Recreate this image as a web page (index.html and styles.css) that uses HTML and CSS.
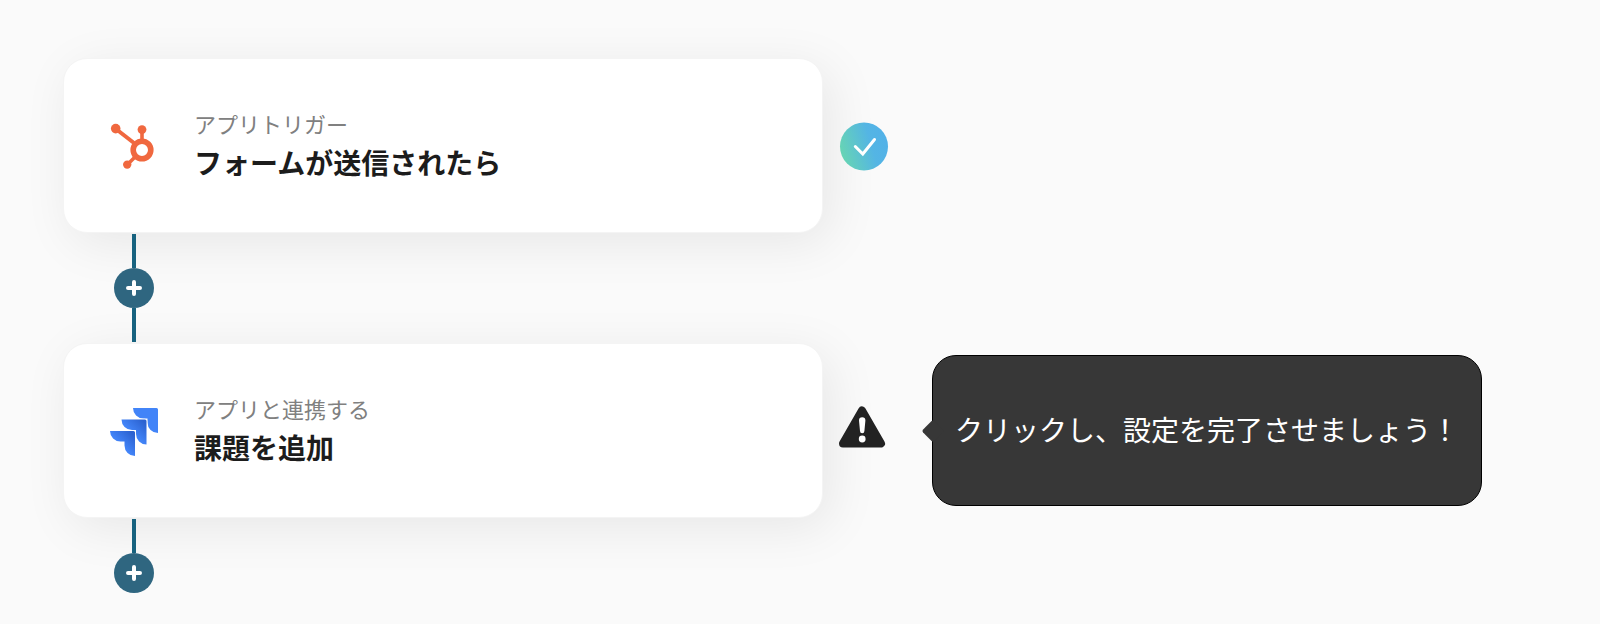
FILE: index.html
```html
<!DOCTYPE html>
<html lang="ja">
<head>
    <meta charset="UTF-8">
    <meta name="viewport" content="width=device-width, initial-scale=1.0">
    <title>ワークフロー</title>
    <link rel="stylesheet" href="styles.css">
</head>
<body>
    <main class="flow">
        <!-- Trigger step -->
        <section class="step">
            <div class="card">
                <svg class="card-icon" viewBox="0 0 48 48" aria-hidden="true">
                    <g fill="none" stroke="#f0683f">
                        <path d="M6 7L24 21" stroke-width="4"/>
                        <path d="M32 7V19" stroke-width="3.600"/>
                        <path d="M26 34L17 43" stroke-width="3.600"/>
                        <circle cx="32" cy="28" r="8.800" stroke-width="5.600"/>
                    </g>
                    <g fill="#f0683f">
                        <circle cx="5.700" cy="6.600" r="4.800"/>
                        <circle cx="32" cy="7.600" r="4.400"/>
                        <circle cx="17.200" cy="42.600" r="4.200"/>
                    </g>
                </svg>
                <div class="card-text">
                    <p class="card-label">アプリトリガー</p>
                    <h2 class="card-title">フォームが送信されたら</h2>
                </div>
            </div>
            <svg class="status" viewBox="0 0 48 48" role="img" aria-label="設定済み">
                <defs>
                    <linearGradient id="done" x1="0" y1="0.65" x2="1" y2="0.35">
                        <stop offset="0.05" stop-color="#66d3b6"/>
                        <stop offset="0.65" stop-color="#54b5e4"/>
                        <stop offset="1" stop-color="#52b1e8"/>
                    </linearGradient>
                </defs>
                <circle cx="24" cy="24.500" r="24" fill="url(#done)"/>
                <path d="M15.300 24.500L22.800 32L34.500 17.500" fill="none" stroke="#fff" stroke-width="3" stroke-linecap="round"/>
            </svg>
        </section>

        <div class="connector">
            <span class="line"></span>
            <button type="button" class="add" aria-label="ステップを追加">
                <svg viewBox="0 0 16 16" aria-hidden="true"><path d="M8 2V14M2 8H14"/></svg>
            </button>
            <span class="line"></span>
        </div>

        <!-- App action step -->
        <section class="step">
            <div class="card">
                <svg class="card-icon" viewBox="0 0 48 48" aria-hidden="true">
                    <defs>
                        <linearGradient id="fold" x1="0.95" y1="0.05" x2="0.45" y2="0.55">
                            <stop offset="0.1" stop-color="#2c62d0"/>
                            <stop offset="1" stop-color="#4284f8"/>
                        </linearGradient>
                    </defs>
                    <path fill="#4284f8" d="M23 1H46.500Q48 1 48 2.500V26A10.500 10.500 0 0 1 37.500 15.500V11.500H33.500A10.500 10.500 0 0 1 23 1Z"/>
                    <g fill="url(#fold)" stroke="#fff" stroke-width="1.600" paint-order="stroke">
                        <path d="M11.500 12.500H35Q36.500 12.500 36.500 14V37.500A10.500 10.500 0 0 1 26 27V23H22A10.500 10.500 0 0 1 11.500 12.500Z"/>
                        <path d="M0 24H23.500Q25 24 25 25.500V49A10.500 10.500 0 0 1 14.500 38.500V34.500H10.500A10.500 10.500 0 0 1 0 24Z"/>
                    </g>
                </svg>
                <div class="card-text">
                    <p class="card-label">アプリと連携する</p>
                    <h2 class="card-title">課題を追加</h2>
                </div>
            </div>
            <svg class="status" viewBox="0 0 48 48" role="img" aria-label="未設定">
                <path fill="#222" stroke="#222" stroke-width="8" stroke-linejoin="round" d="M22 3.500L41 36.500H3Z"/>
                <path fill="#fff" d="M19 13.500A3.200 3.200 0 0 1 25.400 13.500L24.400 24A2.200 2.200 0 0 1 20 24Z"/>
                <circle cx="22.200" cy="32" r="3.400" fill="#fff"/>
            </svg>
            <div class="tooltip" role="tooltip">クリックし、設定を完了させましょう！</div>
        </section>

        <div class="connector">
            <span class="line"></span>
            <button type="button" class="add" aria-label="ステップを追加">
                <svg viewBox="0 0 16 16" aria-hidden="true"><path d="M8 2V14M2 8H14"/></svg>
            </button>
        </div>
    </main>
</body>
</html>
```
FILE: styles.css
```css
* {
    margin: 0;
    padding: 0;
    box-sizing: border-box;
}

body {
    font-family: "Noto Sans CJK JP", sans-serif;
    background-color: #fafafa;
    color: #1c1c1c;
}

.flow {
    padding: 58px 64px 32px 63px;
}

.step {
    display: flex;
    align-items: center;
}

/* White step card */
.card {
    display: flex;
    align-items: center;
    gap: 36px;
    flex: 0 1 760px;
    padding: 46px 46px 45px;
    background-color: #fff;
    border: 1px solid #f4f4f4;
    border-radius: 24px;
    box-shadow: 8px 10px 50px rgba(0, 0, 0, 0.08);
}

.card-icon {
    flex: none;
    width: 48px;
    height: 48px;
    overflow: visible;
}

.card-text {
    padding-bottom: 4px;
}

.card-label {
    font-size: 22px;
    line-height: 36px;
    color: #808080;
}

.card-title {
    font-size: 28px;
    line-height: 42px;
    font-weight: 700;
}

.status {
    flex: none;
    width: 48px;
    height: 48px;
    margin-left: 17px;
    overflow: visible;
}

/* Vertical line with the add button */
.connector {
    position: relative;
    z-index: 1;
    display: flex;
    flex-direction: column;
    align-items: center;
    width: 40px;
    margin-left: 51px;
    padding: 1px 0;
}

.line {
    width: 4px;
    height: 34px;
    background-color: #17627f;
}

.add {
    display: flex;
    align-items: center;
    justify-content: center;
    width: 40px;
    height: 40px;
    border: none;
    border-radius: 50%;
    background-color: #2f6680;
    cursor: pointer;
}

.add svg {
    width: 16px;
    height: 16px;
}

.add path {
    stroke: #fff;
    stroke-width: 4;
    stroke-linecap: round;
}

/* Dark hint next to the unfinished step */
.tooltip {
    position: relative;
    flex: none;
    margin-left: 44px;
    padding: 52px 22px 55px;
    font-size: 28px;
    line-height: 42px;
    color: #fff;
    background-color: #373737;
    border: 1px solid #000;
    border-radius: 24px;
}

.tooltip::before {
    content: "";
    position: absolute;
    top: 50%;
    left: -8px;
    width: 16px;
    height: 16px;
    margin-top: -8px;
    background-color: #373737;
    border-radius: 2px;
    transform: rotate(45deg);
}
```
